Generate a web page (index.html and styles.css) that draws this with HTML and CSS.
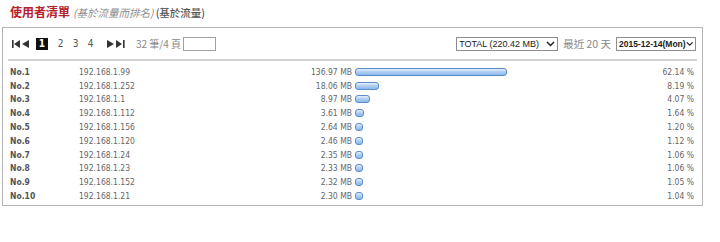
FILE: index.html
```html
<!DOCTYPE html>
<html>
<head>
    <title>使用者清單</title>
    <link rel="stylesheet" href="styles.css">
</head>
<body>
    <div class="title">
        <span class="title-main">使用者清單</span>
        <span class="title-sub">(基於流量而排名)</span>
        <span class="title-mode">(基於流量)</span>
    </div>

    <div class="panel">
        <div class="toolbar">
            <div class="pager">
                <svg class="nav nav-first" width="8" height="8" viewBox="0 0 8 8"><rect x="0" y="0" width="1.6" height="8"/><path d="M8 0 L8 8 L2 4 Z"/></svg>
                <svg class="nav nav-prev" width="7" height="8" viewBox="0 0 7 8"><path d="M7 0 L7 8 L0 4 Z"/></svg>
                <span class="page current">1</span>
                <span class="page">2</span>
                <span class="page">3</span>
                <span class="page">4</span>
                <svg class="nav nav-next" width="7" height="8" viewBox="0 0 7 8"><path d="M0 0 L0 8 L7 4 Z"/></svg>
                <svg class="nav nav-last" width="9" height="8" viewBox="0 0 9 8"><path d="M0 0 L0 8 L6 4 Z"/><rect x="7" y="0" width="1.6" height="8"/></svg>
                <span class="count">32 筆/4 頁</span>
                <span class="goto"></span>
            </div>
            <div class="filters">
                <div class="select select-total">
                    <span>TOTAL (220.42 MB)</span>
                    <svg width="9" height="6" viewBox="0 0 9 6"><path d="M1 1 L4.5 4.5 L8 1" fill="none" stroke="#222" stroke-width="1.5"/></svg>
                </div>
                <span class="days">最近 20 天</span>
                <div class="select select-date">
                    <span>2015-12-14(Mon)</span>
                    <svg width="9" height="6" viewBox="0 0 9 6"><path d="M1 1 L4.5 4.5 L8 1" fill="none" stroke="#222" stroke-width="1.5"/></svg>
                </div>
            </div>
        </div>
        <div class="divider"></div>

        <div class="rows">
            <div class="row"><span class="rank">No.1</span><span class="ip">192.168.1.99</span><span class="size">136.97 MB</span><span class="bar-cell"><span class="bar" style="width: 152px"></span></span><span class="pct">62.14 %</span></div>
            <div class="row"><span class="rank">No.2</span><span class="ip">192.168.1.252</span><span class="size">18.06 MB</span><span class="bar-cell"><span class="bar" style="width: 24px"></span></span><span class="pct">8.19 %</span></div>
            <div class="row"><span class="rank">No.3</span><span class="ip">192.168.1.1</span><span class="size">8.97 MB</span><span class="bar-cell"><span class="bar" style="width: 15px"></span></span><span class="pct">4.07 %</span></div>
            <div class="row"><span class="rank">No.4</span><span class="ip">192.168.1.112</span><span class="size">3.61 MB</span><span class="bar-cell"><span class="bar" style="width: 9px"></span></span><span class="pct">1.64 %</span></div>
            <div class="row"><span class="rank">No.5</span><span class="ip">192.168.1.156</span><span class="size">2.64 MB</span><span class="bar-cell"><span class="bar" style="width: 8px"></span></span><span class="pct">1.20 %</span></div>
            <div class="row"><span class="rank">No.6</span><span class="ip">192.168.1.120</span><span class="size">2.46 MB</span><span class="bar-cell"><span class="bar" style="width: 8px"></span></span><span class="pct">1.12 %</span></div>
            <div class="row"><span class="rank">No.7</span><span class="ip">192.168.1.24</span><span class="size">2.35 MB</span><span class="bar-cell"><span class="bar" style="width: 8px"></span></span><span class="pct">1.06 %</span></div>
            <div class="row"><span class="rank">No.8</span><span class="ip">192.168.1.23</span><span class="size">2.33 MB</span><span class="bar-cell"><span class="bar" style="width: 8px"></span></span><span class="pct">1.06 %</span></div>
            <div class="row"><span class="rank">No.9</span><span class="ip">192.168.1.152</span><span class="size">2.32 MB</span><span class="bar-cell"><span class="bar" style="width: 8px"></span></span><span class="pct">1.05 %</span></div>
            <div class="row"><span class="rank">No.10</span><span class="ip">192.168.1.21</span><span class="size">2.30 MB</span><span class="bar-cell"><span class="bar" style="width: 8px"></span></span><span class="pct">1.04 %</span></div>
        </div>
    </div>
</body>
</html>
```

FILE: styles.css
```css
body {
    margin: 0;
    padding: 0;
    background: #fff;
    font-family: "DejaVu Sans Condensed", "Liberation Sans", "Noto Sans CJK TC", sans-serif;
    color: #666;
}

/* Page title */
.title {
    display: flex;
    align-items: baseline;
    height: 27px;
    padding-left: 10px;
    line-height: 24px;
    font-family: "Noto Sans CJK TC", sans-serif;
}

.title-main {
    font-size: 12px;
    font-weight: bold;
    color: #b5202a;
    margin-right: 3px;
}

.title-sub {
    font-size: 10.5px;
    font-style: italic;
    color: #8a8a8a;
    margin-right: 2px;
}

.title-mode {
    font-size: 10.5px;
    font-weight: 500;
    color: #555;
}

/* Main panel */
.panel {
    width: 701px;
    margin-left: 2px;
    box-sizing: border-box;
    border: 1px solid #b4b4b4;
    padding-bottom: 2px;
}

.toolbar {
    display: flex;
    justify-content: space-between;
    align-items: center;
    height: 31px;
    padding: 0 6px 0 9px;
}

.pager {
    display: flex;
    align-items: center;
    font-size: 10px;
    color: #555;
}

.nav {
    fill: #333;
}

.nav-first { margin-right: 2px; }
.nav-prev { margin-right: 7px; }
.nav-next { margin-left: 9px; margin-right: 2px; }

.page {
    width: 15px;
    text-align: center;
    font-family: "DejaVu Sans Condensed", "Liberation Sans", sans-serif;
}

.page.current {
    width: 12px;
    height: 12px;
    line-height: 12px;
    background: #111;
    color: #fff;
    font-weight: bold;
    margin-right: 5px;
}

.count {
    margin-left: 11px;
    color: #888;
    font-family: "Noto Sans CJK TC", sans-serif;
    font-size: 10px;
}

.goto {
    width: 31px;
    height: 12px;
    margin-left: 2px;
    border: 1px solid #a0a0a0;
}

.filters {
    display: flex;
    align-items: center;
}

.select {
    display: flex;
    justify-content: space-between;
    align-items: center;
    box-sizing: border-box;
    height: 14px;
    padding: 0 2px 0 2px;
    border: 1px solid #8c8c8c;
    font-family: "Liberation Sans", sans-serif;
    font-size: 9px;
    color: #222;
    white-space: nowrap;
}

.select-total {
    width: 102px;
}

.select-date {
    width: 80px;
    font-size: 8.5px;
    font-weight: bold;
}

.days {
    margin: 0 5px;
    color: #888;
    font-family: "Noto Sans CJK TC", sans-serif;
    font-size: 10.5px;
}

.divider {
    height: 2px;
    margin: 0 5px;
    background: #d2d2d2;
}

/* Ranking rows */
.rows {
    padding: 4px 8px 0 7px;
}

.row {
    display: grid;
    grid-template-columns: 69px 200px 73px 260px 1fr;
    align-items: center;
    height: 13.8px;
    font-size: 8.5px;
}

.rank {
    font-weight: bold;
    color: #555;
}

.size,
.pct {
    text-align: right;
}

.bar-cell {
    display: flex;
    padding-left: 3px;
}

.bar {
    display: block;
    height: 8px;
    box-sizing: border-box;
    border: 1px solid #5b8ccb;
    border-radius: 3px;
    background: linear-gradient(#e4effb, #b2d0f2 45%, #8ab6ea);
}
```
